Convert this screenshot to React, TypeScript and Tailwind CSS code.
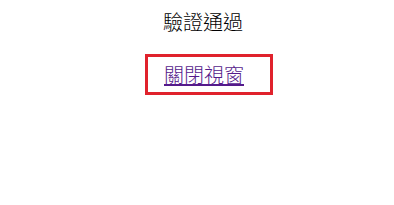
export default function App() {
  return (
    <div
      className="flex h-[205px] w-full flex-col items-center bg-white pl-[12px] text-black"
      style={{ fontFamily: '"Noto Sans CJK TC", "Noto Sans", sans-serif' }}
    >
      <p className="mt-[8px] text-[20px] font-light leading-[28px]">驗證通過</p>
      <div className="ml-[12px] mt-[18px] flex h-[41px] w-[128px] items-center border-[3px] border-[#e0222c] pl-[16px]">
        <a href="#" className="text-[20px] font-light leading-[28px] text-[#551a8b] underline">
          關閉視窗
        </a>
      </div>
    </div>
  );
}
